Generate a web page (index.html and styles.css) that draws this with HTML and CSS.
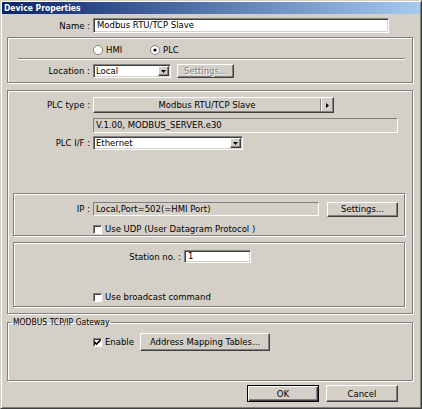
FILE: index.html
```html
<!DOCTYPE html>
<html lang="en">
<head>
    <meta charset="UTF-8">
    <title>Device Properties</title>
    <link rel="stylesheet" href="styles.css">
</head>
<body>
<div class="window">
    <div class="title">Device Properties</div>
    <div class="content">

        <div class="row name-row">
            <span class="lbl lbl-name">Name :</span>
            <span class="edit name-edit">Modbus RTU/TCP Slave</span>
        </div>

        <div class="group group-loc">
            <div class="radio-row">
                <span class="radio-item hmi">
                    <svg class="radio" width="10" height="10" viewBox="0 0 10 10"><circle cx="5" cy="5" r="4.5" fill="#fff" stroke="#808080"/></svg>
                    HMI
                </span>
                <span class="radio-item">
                    <svg class="radio" width="10" height="10" viewBox="0 0 10 10"><circle cx="5" cy="5" r="4.5" fill="#fff" stroke="#808080"/><circle cx="5" cy="5" r="1.6" fill="#000"/></svg>
                    PLC
                </span>
            </div>
            <div class="sep"></div>
            <div class="row loc-row">
                <span class="lbl">Location :</span>
                <span class="combo loc-combo">
                    <span class="combo-text">Local</span>
                    <span class="drop"><svg width="5" height="3" viewBox="0 0 5 3"><path d="M0 0h5L2.5 3z"/></svg></span>
                </span>
                <span class="btn btn-disabled loc-settings">Settings...</span>
            </div>
        </div>

        <div class="group group-plc">
            <div class="row type-row">
                <span class="lbl">PLC type :</span>
                <span class="btn type-btn">
                    <span class="type-text">Modbus RTU/TCP Slave</span>
                    <span class="type-arrow"><svg width="3" height="5" viewBox="0 0 3 5"><path d="M0 0v5L3 2.5z"/></svg></span>
                </span>
            </div>
            <div class="static version">V.1.00, MODBUS_SERVER.e30</div>
            <div class="row if-row">
                <span class="lbl">PLC I/F :</span>
                <span class="combo if-combo">
                    <span class="combo-text">Ethernet</span>
                    <span class="drop"><svg width="5" height="3" viewBox="0 0 5 3"><path d="M0 0h5L2.5 3z"/></svg></span>
                </span>
            </div>

            <div class="group inner ip-box">
                <div class="row ip-row">
                    <span class="lbl lbl-ip">IP :</span>
                    <span class="static ip-field">Local,Port=502(=HMI Port)</span>
                    <span class="btn ip-settings">Settings...</span>
                </div>
                <div class="check-row udp-row">
                    <span class="check"></span>
                    Use UDP (User Datagram Protocol )
                </div>
            </div>

            <div class="group inner station-box">
                <div class="row station-row">
                    <span class="lbl lbl-station">Station no. :</span>
                    <span class="edit station-edit">1</span>
                </div>
                <div class="check-row bcast-row">
                    <span class="check"></span>
                    Use broadcast command
                </div>
            </div>
        </div>

        <fieldset class="gateway">
            <legend>MODBUS TCP/IP Gateway</legend>
            <div class="row enable-row">
                <span class="enable-item">
                    <span class="check">
                        <svg width="7" height="7" viewBox="0 0 7 7"><path d="M0.5 3l2 2 4-4" fill="none" stroke="#000" stroke-width="1.6"/></svg>
                    </span>
                    Enable
                </span>
                <span class="btn map-btn">Address Mapping Tables...</span>
            </div>
        </fieldset>

        <div class="footer">
            <span class="btn btn-default">OK</span>
            <span class="btn cancel-btn">Cancel</span>
        </div>

    </div>
</div>
</body>
</html>
```

FILE: styles.css
```css
body {
    margin: 0;
    background: #fff;
    font-family: "DejaVu Sans", sans-serif;
    font-size: 8.5px;
    color: #000;
}
.window {
    width: 422px;
    height: 409px;
    box-sizing: border-box;
    background: #d4d0c8;
    border: 1px solid;
    border-color: #d4d0c8 #404040 #404040 #d4d0c8;
    box-shadow: inset 1px 1px #fff, inset -1px -1px #808080;
    padding: 1px;
}
.title {
    height: 12px;
    line-height: 12px;
    padding-left: 2px;
    background: linear-gradient(to right, #0a246a, #a6caf0);
    color: #fff;
    font-family: "DejaVu Sans Condensed", "DejaVu Sans", sans-serif;
    font-weight: bold;
}
.content {
    padding: 0 7px 0 5px;
}
.row {
    display: flex;
    align-items: center;
}
.lbl {
    flex: none;
    width: 85px;
    box-sizing: border-box;
    padding-right: 3px;
    text-align: right;
}
.edit, .combo {
    box-sizing: border-box;
    border: 1px solid;
    border-color: #808080 #fff #fff #808080;
    box-shadow: inset 1px 1px #404040, inset -1px -1px #d4d0c8;
    background: #fff;
}
.edit {
    padding: 0 3px;
}
.static {
    box-sizing: border-box;
    border: 1px solid;
    border-color: #808080 #fff #fff #808080;
    padding: 0 2px;
    line-height: 13px;
}
.btn {
    box-sizing: border-box;
    display: flex;
    align-items: center;
    justify-content: center;
    border: 1px solid;
    border-color: #fff #404040 #404040 #fff;
    box-shadow: inset -1px -1px #808080;
    background: #d4d0c8;
}
.btn-disabled {
    color: #808080;
    text-shadow: 1px 1px #fff;
}
.btn-default {
    border: 1px solid #000;
    box-shadow: inset 1px 1px #fff, inset -1px -1px #404040, inset -2px -2px #808080;
}

/* name */
.name-row {
    margin-top: 4px;
    height: 15px;
}
.lbl-name {
    width: 86px;
}
.name-edit {
    width: 296px;
    height: 15px;
    line-height: 13px;
}

/* group boxes */
.group {
    box-sizing: border-box;
    border: 1px solid #808080;
    box-shadow: inset 1px 1px #fff, 1px 1px #fff;
}
.group-loc {
    margin-top: 4px;
    height: 46px;
}
.radio-row {
    display: flex;
    align-items: center;
    height: 10px;
    margin-top: 7px;
    padding-left: 85px;
}
.radio-item {
    display: flex;
    align-items: center;
    gap: 3px;
}
.radio-item.hmi {
    width: 57px;
}
.sep {
    margin: 3px 7px 0 10px;
    border-top: 1px solid #808080;
    border-bottom: 1px solid #fff;
}
.loc-row {
    margin-top: 4px;
    height: 14px;
}
.combo {
    display: flex;
    height: 14px;
}
.combo-text {
    flex: 1;
    padding-left: 2px;
    line-height: 12px;
}
.drop {
    width: 11px;
    margin: 1px;
    display: flex;
    align-items: center;
    justify-content: center;
    box-sizing: border-box;
    border: 1px solid;
    border-color: #fff #404040 #404040 #fff;
    box-shadow: inset -1px -1px #808080;
    background: #d4d0c8;
}
.loc-combo {
    width: 78px;
}
.loc-settings {
    width: 57px;
    height: 14px;
    margin-left: 6px;
}

/* plc group */
.group-plc {
    margin-top: 7px;
    height: 224px;
}
.type-row {
    margin-top: 6px;
    height: 16px;
}
.type-btn {
    width: 241px;
    height: 16px;
}
.type-text {
    flex: 1;
    text-align: center;
}
.type-arrow {
    width: 12px;
    height: 12px;
    display: flex;
    align-items: center;
    justify-content: center;
    border-left: 1px solid #808080;
    box-shadow: inset 1px 0 #fff;
}
.version {
    margin: 5px 0 0 85px;
    width: 305px;
    height: 15px;
}
.if-row {
    margin-top: 3px;
    height: 14px;
}
.if-combo {
    width: 150px;
}
.inner {
    margin: 0 7px 0 5px;
}
.ip-box {
    margin-top: 43px;
    height: 43px;
}
.ip-row {
    margin-top: 8px;
    height: 14px;
}
.lbl-ip {
    width: 79px;
}
.ip-field {
    width: 226px;
    height: 14px;
    line-height: 12px;
}
.ip-settings {
    width: 71px;
    height: 15px;
    margin-left: 8px;
}
.check-row {
    display: flex;
    align-items: center;
    gap: 3px;
    height: 10px;
    padding-left: 79px;
}
.check {
    width: 9px;
    height: 9px;
    flex: none;
    box-sizing: border-box;
    display: flex;
    align-items: center;
    justify-content: center;
    border: 1px solid;
    border-color: #808080 #fff #fff #808080;
    box-shadow: inset 1px 1px #404040;
    background: #fff;
}
.udp-row {
    margin-top: 8px;
}
.station-box {
    margin-top: 6px;
    height: 65px;
}
.station-row {
    margin-top: 7px;
    height: 13px;
}
.lbl-station {
    width: 170px;
}
.station-edit {
    width: 67px;
    height: 13px;
    line-height: 11px;
}
.bcast-row {
    margin-top: 29px;
}

/* gateway */
.gateway {
    margin: 3px 0 0;
    padding: 0 0 29px;
    min-inline-size: 0;
    border: 1px solid #808080;
    box-shadow: inset 1px 1px #fff, 1px 1px #fff;
}
.gateway legend {
    margin-left: 3px;
    padding: 0 2px;
    line-height: 10px;
    font-family: "DejaVu Sans Condensed", "DejaVu Sans", sans-serif;
}
.enable-row {
    margin-top: 6px;
    height: 18px;
    padding-left: 85px;
}
.enable-item {
    display: flex;
    align-items: center;
    gap: 3px;
    width: 47px;
}
.map-btn {
    width: 130px;
    height: 18px;
}

/* footer */
.footer {
    display: flex;
    justify-content: flex-end;
    gap: 7px;
    margin: 4px 15px 0 0;
}
.footer .btn {
    width: 72px;
    height: 17px;
}
```
